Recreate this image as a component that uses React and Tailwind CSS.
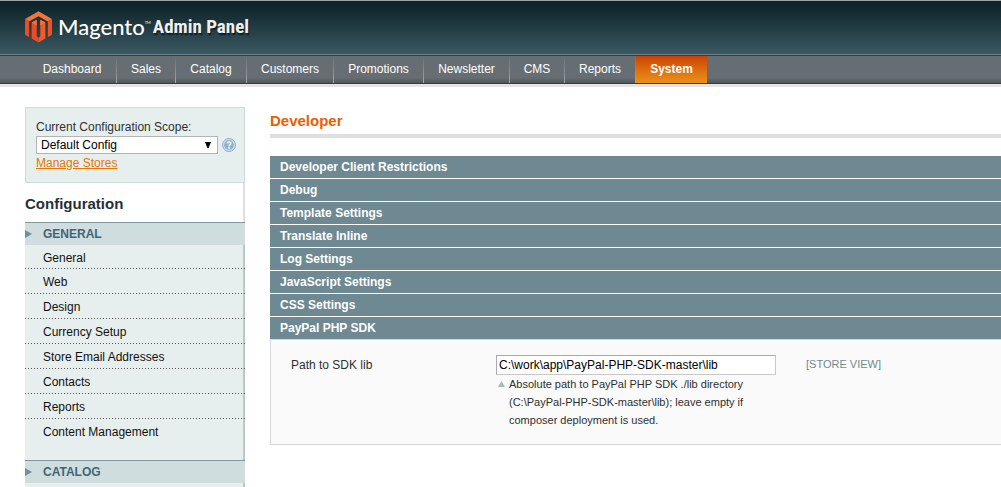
import React from "react";

const navItems = [
  { label: "Dashboard", width: "w-[89px]" },
  { label: "Sales", width: "w-[59px]" },
  { label: "Catalog", width: "w-[71px]" },
  { label: "Customers", width: "w-[87px]" },
  { label: "Promotions", width: "w-[90px]" },
  { label: "Newsletter", width: "w-[86px]" },
  { label: "CMS", width: "w-[55px]" },
  { label: "Reports", width: "w-[71px]" },
];

const generalLinks = [
  "General",
  "Web",
  "Design",
  "Currency Setup",
  "Store Email Addresses",
  "Contacts",
  "Reports",
  "Content Management",
];

const sections = [
  "Developer Client Restrictions",
  "Debug",
  "Template Settings",
  "Translate Inline",
  "Log Settings",
  "JavaScript Settings",
  "CSS Settings",
  "PayPal PHP SDK",
];

function Logo() {
  return (
    <svg viewBox="0 0 27 32" className="h-8 w-[27px] shrink-0" aria-hidden="true">
      <path d="M13.5 0.3 27 8 22.8 10.5 13.5 5.2 4.2 10.5 0 8Z" fill="#f4733d" />
      <path d="M0 8 4.2 10.5V26.2L0 23.8Z" fill="#ee4a23" />
      <path d="M27 8 22.8 10.5V26.2L27 23.8Z" fill="#f15022" />
      <path d="M6.6 11.6 11.7 8.8V25.6L13.5 26.8V31.6L6.6 27.6Z" fill="#ee4a23" />
      <path d="M20.4 11.6 15.3 8.8V25.6L13.5 26.8V31.6L20.4 27.6Z" fill="#f15a29" />
      <path d="M6.6 11.6 11.7 8.8V14.4ZM20.4 11.6 15.3 8.8V14.4Z" fill="#f4733d" />
    </svg>
  );
}

function Header() {
  return (
    <header>
      <div className="flex h-14 items-center border-t border-b border-t-[#98a4a7] border-b-[#273f47] bg-linear-to-b from-[#0c2026] to-[#3b5a63] pb-[3px] pl-[25px] shadow-[inset_0_-1px_0_#6d8289]">
        <a href="#home" className="flex items-center" aria-label="Magento Admin Panel">
          <Logo />
          <span className="ml-[6px] font-['Lato',sans-serif] text-[22px] leading-8 font-medium text-white">Magento</span>
          <span className="mb-2 font-['Lato',sans-serif] text-[4px] leading-4 text-white">TM</span>
          <span className="ml-[2px] font-['Roboto_Condensed',Roboto,sans-serif] text-[19px] leading-8 font-bold text-[#f0f0f0] [text-shadow:1px_2px_1px_#0c2026]">
            Admin Panel
          </span>
        </a>
      </div>
      <nav className="flex h-7 border-b border-b-[#343c40] bg-linear-to-b from-[#666e73] from-80% to-[#50575b] pl-7 text-[12px] leading-[26px] text-white">
        {navItems.map((item) => (
          <a
            key={item.label}
            href={`#${item.label.toLowerCase()}`}
            className={`${item.width} shrink-0 border-r [border-image:linear-gradient(#666e73,#a4a9ab)_1] text-center`}
          >
            {item.label}
          </a>
        ))}
        <a
          href="#system"
          aria-current="page"
          className="w-[71px] shrink-0 bg-linear-to-b from-[#cb4203] to-[#ea9119] text-center font-bold"
        >
          System
        </a>
      </nav>
      <div className="h-[3px] bg-[#e6e3e4]" />
    </header>
  );
}

function HelpIcon() {
  return (
    <svg viewBox="0 0 14 14" className="size-[14px] shrink-0" fill="none" aria-hidden="true">
      <circle cx="7" cy="7" r="6.4" fill="#dce9f2" stroke="#83a7c5" />
      <circle cx="7" cy="7" r="4.9" fill="#8fb2d3" />
      <path d="M5.2 5.6C5.2 3.4 8.9 3.5 8.8 5.5 8.8 6.7 7 6.8 7 8.2" stroke="#fff" strokeWidth="1.4" />
      <circle cx="7" cy="10" r="0.9" fill="#fff" />
    </svg>
  );
}

function GroupTitle({ children }) {
  return (
    <h4 className="flex h-[23px] items-center border-t border-[#7d999e] bg-[#d0dddf] text-[12px] font-bold text-[#3d6678]">
      <svg viewBox="0 0 7 8" className="mr-[11px] h-2 w-[7px]" aria-hidden="true">
        <path d="M0 0 7 4 0 8Z" fill="#6f9198" />
      </svg>
      {children}
    </h4>
  );
}

function Sidebar() {
  return (
    <aside className="w-[220px] shrink-0">
      <div className="h-[76px] border border-[#ccdcdc] bg-[#e6efee] px-[10px] pt-[11px] leading-4">
        <label htmlFor="scope" className="mb-px block text-[#303030]">
          Current Configuration Scope:
        </label>
        <div className="mb-px flex items-center gap-1">
          <div className="relative w-[182px] shrink-0">
            <select
              id="scope"
              className="block h-[18px] w-full appearance-none border border-[#b5b5b5] bg-white pl-1 text-[12px] leading-4 text-black"
            >
              <option>Default Config</option>
            </select>
            <svg viewBox="0 0 6 6" className="pointer-events-none absolute top-[6px] right-[7px] size-[6px]" aria-hidden="true">
              <path d="M0 0H6L3.6 6H2.4Z" fill="#000" />
            </svg>
          </div>
          <HelpIcon />
        </div>
        <a href="#stores" className="block text-[#ea7601] underline">
          Manage Stores
        </a>
      </div>
      <h3 className="h-[39px] border-r-2 border-[#dedede] pt-[11px] text-[15px] leading-5 font-bold text-[#253033]">
        Configuration
      </h3>
      <GroupTitle>GENERAL</GroupTitle>
      <ul className="bg-[#e7efee] pb-4 shadow-[inset_-2px_0_0_#b5c8ca]">
        {generalLinks.map((link) => (
          <li key={link} className="group">
            <a href={`#${link}`} className="block h-6 pl-[18px] leading-[26px] text-[#111] group-first:h-[23px]">
              {link}
            </a>
            <div className="h-px bg-[repeating-linear-gradient(90deg,#555_0_1px,transparent_1px_3px)] group-last:bg-none" />
          </li>
        ))}
      </ul>
      <GroupTitle>CATALOG</GroupTitle>
      <div className="h-4 bg-[#e7efee] shadow-[inset_-2px_0_0_#b5c8ca]" />
    </aside>
  );
}

function Content() {
  return (
    <main className="min-w-0 flex-1">
      <h2 className="border-b-4 border-[#dfdfdf] pt-1 pb-[3px] text-[15px] leading-5 font-bold text-[#eb5e00]">Developer</h2>
      <div className="mt-[18px]">
        {sections.map((name) => (
          <h4 key={name} className="mb-px last:mb-0">
            <button type="button" className="block h-[22px] w-full bg-[#6f8992] pl-[10px] text-left leading-[22px] font-bold text-white">
              {name}
            </button>
          </h4>
        ))}
      </div>
      <div className="flex h-[106px] border border-r-0 border-[#d6d6d6] bg-[#fafafa] pt-[15px] pl-5">
        <label htmlFor="sdk" className="w-[205px] shrink-0 pt-[2px] leading-4 text-[#2f2f2f]">
          Path to SDK lib
        </label>
        <div className="w-[280px] shrink-0">
          <input
            id="sdk"
            type="text"
            defaultValue={"C:\\work\\app\\PayPal-PHP-SDK-master\\lib"}
            className="block h-5 w-full border border-[#aaa] border-r-[#c8c8c8] border-b-[#c8c8c8] bg-white px-[2px] text-[12px] text-black"
          />
          <div className="flex gap-1">
            <svg viewBox="0 0 7 6" className="mt-[6px] ml-[2px] h-[6px] w-[7px] shrink-0" aria-hidden="true">
              <path d="M3.5 0 7 6H0Z" fill="#a9b8be" />
            </svg>
            <p className="text-[11px] leading-[18px] text-[#2f2f2f]">
              Absolute path to PayPal PHP SDK ./lib directory
              <br />
              (C:\PayPal-PHP-SDK-master\lib); leave empty if
              <br />
              composer deployment is used.
            </p>
          </div>
        </div>
        <span className="ml-[30px] pt-px text-[11px] leading-4 text-[#6f8992]">[STORE VIEW]</span>
      </div>
    </main>
  );
}

export default function App() {
  return (
    <div className="h-screen overflow-hidden bg-white font-['Liberation_Sans',Arial,sans-serif] text-[12px]">
      <Header />
      <div className="flex gap-[25px] pt-5 pl-[25px]">
        <Sidebar />
        <Content />
      </div>
    </div>
  );
}
